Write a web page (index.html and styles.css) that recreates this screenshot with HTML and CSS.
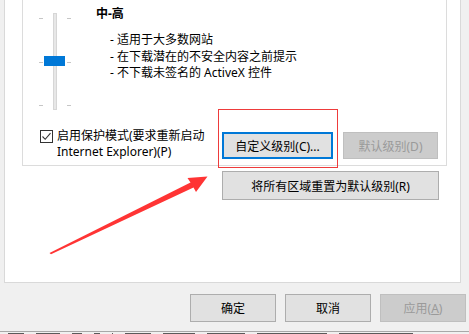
FILE: index.html
```html
<!DOCTYPE html>
<html lang="zh-CN">
<head>
    <meta charset="UTF-8">
    <title>Internet 选项</title>
    <link rel="stylesheet" href="styles.css">
</head>
<body>
    <div class="window">
        <div class="sheet">
            <div class="group">
                <div class="level">
                    <div class="slider">
                        <div class="ticks"><span></span><span></span><span></span></div>
                        <div class="track"><div class="thumb"></div></div>
                        <div class="ticks"><span></span><span></span><span></span></div>
                    </div>
                    <div class="level-text">
                        <h2 class="level-title">中-高</h2>
                        <ul class="level-list">
                            <li>- 适用于大多数网站</li>
                            <li>- 在下载潜在的不安全内容之前提示</li>
                            <li>- 不下载未签名的 ActiveX 控件</li>
                        </ul>
                    </div>
                </div>
                <div class="group-foot">
                    <label class="check">
                        <span class="box">
                            <svg width="11" height="11" viewBox="0 0 11 11"><path d="M1.5 5.5 L4.2 8.3 L9.5 2.2" fill="none" stroke="#333" stroke-width="1.1"/></svg>
                        </span>
                        <span class="check-text">启用保护模式(要求重新启动<br>Internet Explorer)(P)</span>
                    </label>
                    <div class="level-buttons">
                        <button class="btn btn-focus">自定义级别(C)...</button>
                        <button class="btn btn-default" disabled>默认级别(D)</button>
                    </div>
                </div>
            </div>
            <div class="reset-row">
                <button class="btn btn-reset">将所有区域重置为默认级别(R)</button>
            </div>
        </div>

        <div class="dialog-buttons">
            <button class="btn btn-dialog">确定</button>
            <button class="btn btn-dialog">取消</button>
            <button class="btn btn-dialog" disabled>应用(<u>A</u>)</button>
        </div>

        <!-- the window behind the dialog peeks out along the bottom edge -->
        <div class="under">
            <span class="ink" style="width: 16px"></span>
            <span class="ink" style="width: 24px"></span>
            <span class="ink" style="width: 10px"></span>
            <span class="ink" style="width: 6px"></span>
            <span class="ink" style="width: 1px"></span>
            <span class="ink" style="width: 26px"></span>
            <span class="ink" style="width: 32px"></span>
            <span class="ink" style="width: 38px"></span>
            <span class="ink" style="width: 70px"></span>
            <span class="ink" style="width: 74px"></span>
        </div>

        <!-- annotation drawn over the dialog -->
        <div class="highlight"></div>
        <svg class="arrow" width="469" height="334" viewBox="0 0 469 334">
            <polygon points="49.5,253 190.5,182.5 187.5,178 207.5,176.5 196,192 193.5,187.5 51,254.2" fill="#ff3434"/>
        </svg>
    </div>
</body>
</html>
```

FILE: styles.css
```css
* {
    margin: 0;
    padding: 0;
    box-sizing: border-box;
}

body {
    font-family: "Noto Sans", "Noto Sans CJK SC", sans-serif;
    font-size: 12px;
    color: #000;
    background: #f0f0f0;
}

.window {
    position: relative;
    width: 469px;
    height: 334px;
    overflow: hidden;
    background: #f0f0f0;
}

.sheet {
    margin-left: 4px;
    width: 457px;
    height: 283px;
    background: #fff;
    border: 1px solid #d9d9d9;
    border-top: none;
    padding-left: 17px;
}

.group {
    width: 425px;
    border: 1px solid #dcdcdc;
    border-top: none;
    padding-bottom: 5px;
}

.level {
    display: flex;
    padding-left: 16px;
}

.slider {
    display: flex;
    margin-top: 13px;
    height: 97px;
}

.ticks {
    width: 4px;
    display: flex;
    flex-direction: column;
    justify-content: space-between;
    padding: 5px 0 4px;
}

.ticks span {
    display: block;
    height: 1px;
    background: #c6c6c6;
}

.track {
    position: relative;
    width: 4px;
    margin: 0 10px;
    border: 1px solid #d6d6d6;
    background: #e7e7e7;
}

.thumb {
    position: absolute;
    left: -10px;
    top: 42px;
    width: 21px;
    height: 10px;
    background: #0078d7;
}

.level-text {
    margin-left: 25px;
}

.level-title {
    margin-top: 6px;
    font-size: 12px;
    font-weight: bold;
    line-height: 16px;
}

.level-list {
    list-style: none;
    margin-top: 10px;
    padding-left: 14px;
    line-height: 16.5px;
}

.group-foot {
    display: flex;
    align-items: flex-start;
    margin-top: 20px;
}

.check {
    display: flex;
    align-items: flex-start;
    margin-left: 17px;
}

.box {
    width: 13px;
    height: 13px;
    border: 1px solid #333;
    display: flex;
    align-items: center;
    justify-content: center;
    background: #fff;
}

.check-text {
    margin-left: 4px;
    margin-top: -2px;
    line-height: 16px;
}

.level-buttons {
    display: flex;
    gap: 10px;
    margin-left: auto;
    margin-right: 8px;
    margin-top: 2px;
}

.btn {
    font-family: inherit;
    font-size: 12px;
    color: #000;
    height: 27px;
    background: #e1e1e1;
    border: 1px solid #adadad;
    display: flex;
    align-items: center;
    justify-content: center;
}

.btn:disabled {
    background: #cccccc;
    border-color: #bfbfbf;
    color: #9a9a9a;
}

.btn-focus {
    width: 111px;
    border: 2px solid #0078d7;
}

.btn-default {
    width: 95px;
}

.reset-row {
    display: flex;
    padding-left: 200px;
    margin-top: 5px;
}

.btn-reset {
    width: 217px;
    height: 29px;
}

.dialog-buttons {
    display: flex;
    gap: 9px;
    padding-left: 190px;
    margin-top: 11px;
}

.btn-dialog {
    width: 86px;
    height: 28px;
}

.under {
    margin-top: 9px;
    height: 3px;
    border-top: 1px solid #a8a8a8;
    display: flex;
    align-items: flex-end;
    gap: 12px;
    padding-left: 8px;
}

.ink {
    display: block;
    height: 1px;
    background: #5a5a5a;
}

.highlight {
    position: absolute;
    left: 218px;
    top: 109px;
    width: 120px;
    height: 59px;
    border: 1px solid #ee3b3b;
}

.arrow {
    position: absolute;
    left: 0;
    top: 0;
    pointer-events: none;
}
```
